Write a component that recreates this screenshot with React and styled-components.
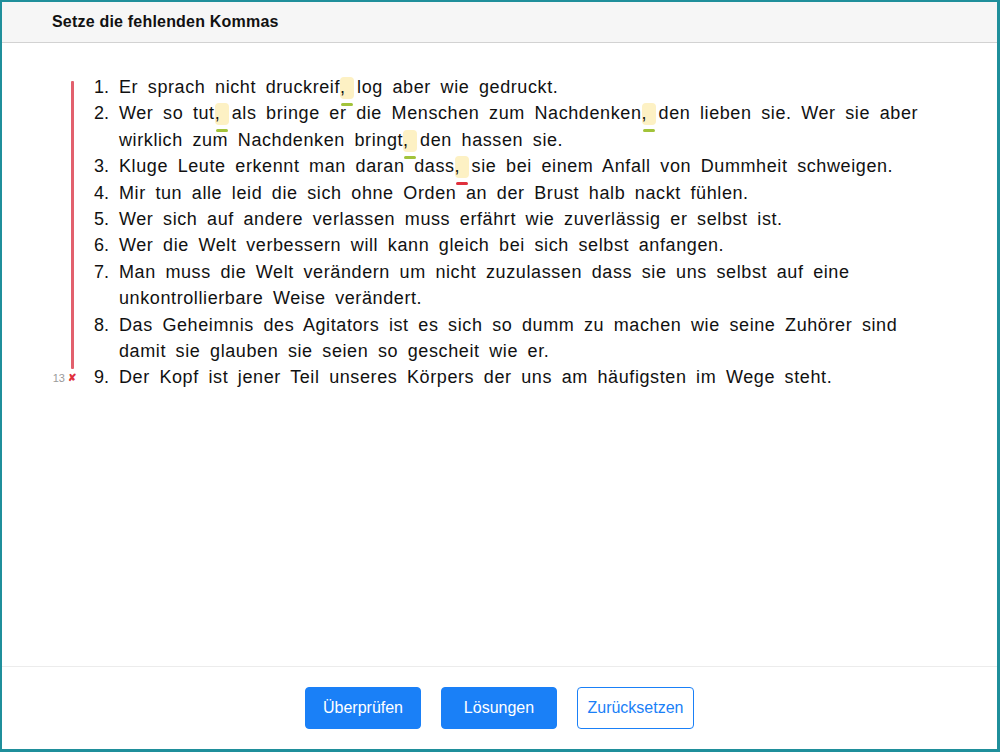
import styled, { createGlobalStyle } from "styled-components";

const GlobalStyle = createGlobalStyle`
    html, body {
        margin: 0;
        padding: 0;
        background: #ffffff;
    }
    body {
        font-family: "Liberation Sans", Arial, sans-serif;
        color: #111111;
    }
    * {
        box-sizing: border-box;
    }
`

const Frame = styled.div`
    height: 100vh;
    display: flex;
    flex-direction: column;
    border-style: solid;
    border-color: #1f8f9b;
    border-width: 2px 3px 3px 2px;
    background: #ffffff;
`

const Header = styled.header`
    height: 41px;
    flex: none;
    display: flex;
    align-items: center;
    padding-left: 50px;
    background: #f6f6f6;
    border-bottom: 1px solid #d2d2d2;
`

const Title = styled.h1`
    margin: 0;
    font-size: 16px;
    letter-spacing: 0.2px;
    font-weight: bold;
    color: #111111;
`

const Main = styled.main`
    flex: 1;
    padding: 31px 62px 0 50px;
`

const Exercise = styled.div`
    display: flex;
`

const Gutter = styled.div`
    width: 24px;
    flex: none;
    display: flex;
    flex-direction: column;
    align-items: flex-end;
`

const Bar = styled.div`
    flex: 1;
    width: 3px;
    margin: 7px 2px 0 0;
    background: #e2606d;
    border-radius: 1px;
`

const Marker = styled.div`
    height: 22px;
    padding-bottom: 4px;
    display: flex;
    align-items: center;
    gap: 3px;
    font-size: 11px;
    color: #9a9a9a;
`

const Cross = styled.span`
    color: #e0303c;
    font-size: 10px;
    font-weight: bold;
`

const List = styled.ol`
    flex: 1;
    margin: 0;
    padding: 0;
    list-style: none;
    font-size: 18px;
    line-height: 26.4px;
    letter-spacing: 0.6px;
    word-spacing: 4px;
`

const Item = styled.li`
    display: flex;
`

const Num = styled.span`
    width: 33px;
    flex: none;
    text-align: right;
    margin-right: 10px;
    letter-spacing: 0;
`

const Text = styled.span`
    flex: 1;
`

const Gap = styled.span`
    position: relative;
    display: inline-block;
    width: 14px;
    height: 22px;
    line-height: 20px;
    margin-right: 3px;
    background: #fdf1c4;
    border-radius: 4px;
    word-spacing: 0;
    letter-spacing: 0;

    &::after {
        content: "";
        position: absolute;
        left: 1px;
        right: 1px;
        bottom: -7px;
        height: 3px;
        border-radius: 2px;
        background: ${({ $state }) => ($state === "wrong" ? "#e0303c" : "#a2c33a")};
    }
`

const Footer = styled.footer`
    flex: none;
    height: 83px;
    display: flex;
    align-items: center;
    justify-content: center;
    gap: 20px;
    border-top: 1px solid #ececec;
`

const Button = styled.button`
    width: ${({ $w }) => $w || 116}px;
    height: 42px;
    border-radius: 4px;
    font-family: "Liberation Sans", Arial, sans-serif;
    font-size: 16px;
    cursor: pointer;
    border: 1px solid #1a80f7;
    background: ${({ $outline }) => ($outline ? "#ffffff" : "#1a80f7")};
    color: ${({ $outline }) => ($outline ? "#1a80f7" : "#ffffff")};
`

function App() {
    return (
        <>
            <GlobalStyle />
            <Frame>
                <Header>
                    <Title>Setze die fehlenden Kommas</Title>
                </Header>
                <Main>
                    <Exercise>
                        <Gutter>
                            <Bar />
                            <Marker>
                                13<Cross>✘</Cross>
                            </Marker>
                        </Gutter>
                        <List>
                            <Item>
                                <Num>1.</Num>
                                <Text>
                                    Er sprach nicht druckreif<Gap>,</Gap>log aber wie gedruckt.
                                </Text>
                            </Item>
                            <Item>
                                <Num>2.</Num>
                                <Text>
                                    Wer so tut<Gap>,</Gap>als bringe er die Menschen zum Nachdenken<Gap>,</Gap>den lieben sie. Wer sie aber wirklich zum Nachdenken bringt<Gap>,</Gap>den hassen sie.
                                </Text>
                            </Item>
                            <Item>
                                <Num>3.</Num>
                                <Text>
                                    Kluge Leute erkennt man daran dass<Gap $state="wrong">,</Gap>sie bei einem Anfall von Dummheit schweigen.
                                </Text>
                            </Item>
                            <Item>
                                <Num>4.</Num>
                                <Text>Mir tun alle leid die sich ohne Orden an der Brust halb nackt fühlen.</Text>
                            </Item>
                            <Item>
                                <Num>5.</Num>
                                <Text>Wer sich auf andere verlassen muss erfährt wie zuverlässig er selbst ist.</Text>
                            </Item>
                            <Item>
                                <Num>6.</Num>
                                <Text>Wer die Welt verbessern will kann gleich bei sich selbst anfangen.</Text>
                            </Item>
                            <Item>
                                <Num>7.</Num>
                                <Text>Man muss die Welt verändern um nicht zuzulassen dass sie uns selbst auf eine unkontrollierbare Weise verändert.</Text>
                            </Item>
                            <Item>
                                <Num>8.</Num>
                                <Text>Das Geheimnis des Agitators ist es sich so dumm zu machen wie seine Zuhörer sind damit sie glauben sie seien so gescheit wie er.</Text>
                            </Item>
                            <Item>
                                <Num>9.</Num>
                                <Text>Der Kopf ist jener Teil unseres Körpers der uns am häufigsten im Wege steht.</Text>
                            </Item>
                        </List>
                    </Exercise>
                </Main>
                <Footer>
                    <Button>Überprüfen</Button>
                    <Button>Lösungen</Button>
                    <Button $outline $w={117}>Zurücksetzen</Button>
                </Footer>
            </Frame>
        </>
    );
}

export default App;
